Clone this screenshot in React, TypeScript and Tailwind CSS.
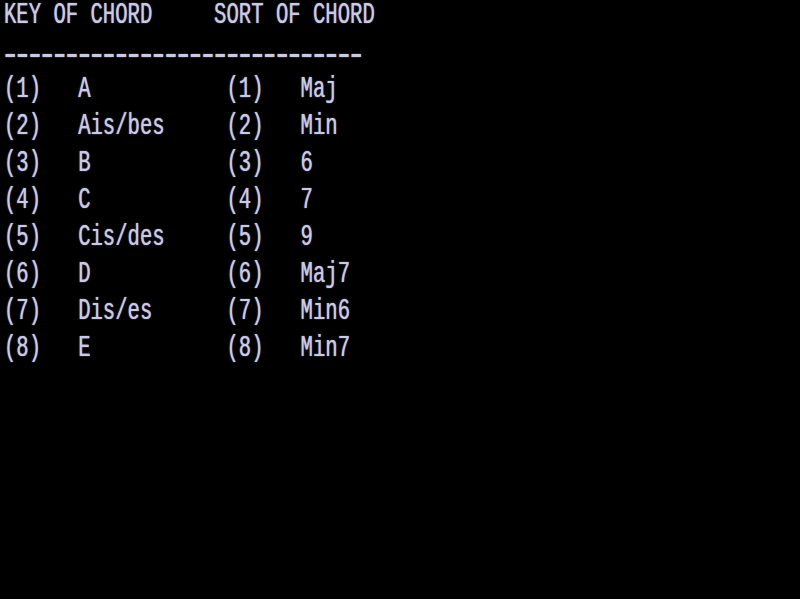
const rows: [string, string, string, string][] = [
  ['(1)', 'A', '(1)', 'Maj'],
  ['(2)', 'Ais/bes', '(2)', 'Min'],
  ['(3)', 'B', '(3)', '6'],
  ['(4)', 'C', '(4)', '7'],
  ['(5)', 'Cis/des', '(5)', '9'],
  ['(6)', 'D', '(6)', 'Maj7'],
  ['(7)', 'Dis/es', '(7)', 'Min6'],
  ['(8)', 'E', '(8)', 'Min7'],
];

const pad = (s: string, n: number) => s + ' '.repeat(Math.max(0, n - s.length));

const Line = ({ text, className = '' }: { text: string; className?: string }) => (
  <div className="h-[37px] whitespace-pre">
    <span className={`inline-block origin-top scale-y-[1.42] ${className}`}>{text}</span>
  </div>
);

export default function App() {
  return (
    <div
      className="w-[800px] h-[599px] overflow-hidden bg-black text-[#cacae6] pl-[4px] text-[20.6px] leading-[22px] [text-shadow:0_0_1px_#b8b8dc]"
      style={{ fontFamily: '"Liberation Mono", monospace' }}
    >
      <Line text={pad('KEY OF CHORD', 17) + 'SORT OF CHORD'} />
      <Line text={'\u2013'.repeat(29)} className="translate-y-[3px] font-bold" />
      {rows.map((r) => (
        <Line key={r[0]} text={pad(r[0], 6) + pad(r[1], 12) + pad(r[2], 6) + r[3]} />
      ))}
    </div>
  );
}
